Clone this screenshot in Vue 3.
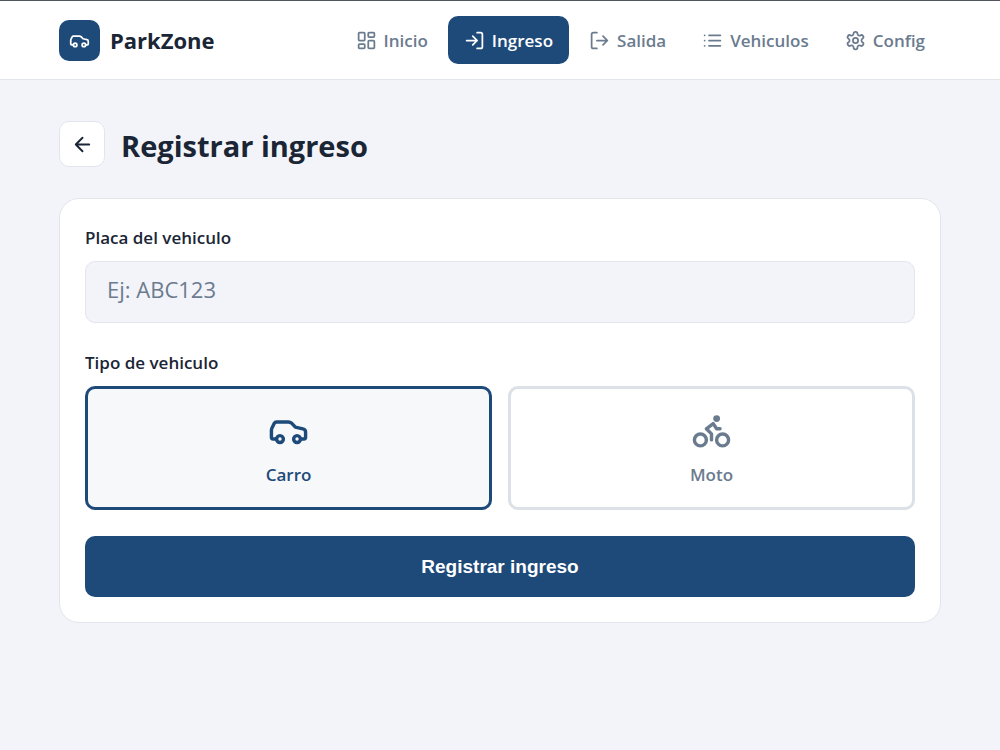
<script setup>
import { ref } from 'vue'

const plate = ref('')
const vehicleType = ref('carro')
const navItems = [
  { id: 'inicio', label: 'Inicio' },
  { id: 'ingreso', label: 'Ingreso' },
  { id: 'salida', label: 'Salida' },
  { id: 'vehiculos', label: 'Vehiculos' },
  { id: 'config', label: 'Config' }
]
const current = 'ingreso'
const carBody =
  'M19 17h2c.6 0 1-.4 1-1v-3c0-.9-.7-1.7-1.5-1.9C18.7 10.6 16 10 16 10s-1.3-1.4-2.2-2.3c-.5-.4-1.1-.7-1.800-.7H5c-.6 0-1.1.4-1.4.9l-1.4 2.9A3.700 3.700 0 0 0 2 12v4c0 .6.4 1 1 1h2'
</script>

<template>
  <div class="page">
    <header class="topbar">
      <div class="topbar-inner">
        <a class="brand" href="#">
          <span class="brand-mark">
            <svg class="icon small-icon" viewBox="0 0 24 24" aria-hidden="true">
              <path :d="carBody" />
              <circle cx="7" cy="17" r="2" />
              <circle cx="17" cy="17" r="2" />
            </svg>
          </span>
          <span class="brand-name">ParkZone</span>
        </a>
        <nav class="nav" aria-label="Principal">
          <a
            v-for="item in navItems"
            :key="item.id"
            class="nav-link"
            :class="{ active: item.id === current }"
            :aria-current="item.id === current ? 'page' : undefined"
            :href="'#' + item.id"
          >
            <svg class="icon small-icon" viewBox="0 0 24 24" aria-hidden="true">
              <g v-if="item.id === 'inicio'">
                <rect x="3" y="3" width="7" height="9" rx="1" />
                <rect x="14" y="3" width="7" height="5" rx="1" />
                <rect x="14" y="12" width="7" height="9" rx="1" />
                <rect x="3" y="16" width="7" height="5" rx="1" />
              </g>
              <path v-else-if="item.id === 'ingreso'" d="M15 3h4a2 2 0 0 1 2 2v14a2 2 0 0 1-2 2h-4M10 17l5-5-5-5M15 12H3" />
              <path v-else-if="item.id === 'salida'" d="M9 21H5a2 2 0 0 1-2-2V5a2 2 0 0 1 2-2h4M16 17l5-5-5-5M21 12H9" />
              <path v-else-if="item.id === 'vehiculos'" d="M8 6h13M8 12h13M8 18h13M3 6h.01M3 12h.01M3 18h.01" />
              <g v-else>
                <path d="M12.220 2h-.440a2 2 0 0 0-2 2v.180a2 2 0 0 1-1 1.730l-.430.250a2 2 0 0 1-2 0l-.150-.080a2 2 0 0 0-2.730.730l-.220.380a2 2 0 0 0 .730 2.730l.150.100a2 2 0 0 1 1 1.720v.510a2 2 0 0 1-1 1.740l-.150.090a2 2 0 0 0-.730 2.730l.220.380a2 2 0 0 0 2.730.730l.150-.080a2 2 0 0 1 2 0l.430.250a2 2 0 0 1 1 1.730V20a2 2 0 0 0 2 2h.440a2 2 0 0 0 2-2v-.180a2 2 0 0 1 1-1.730l.430-.250a2 2 0 0 1 2 0l.150.080a2 2 0 0 0 2.730-.730l.220-.390a2 2 0 0 0-.730-2.730l-.150-.080a2 2 0 0 1-1-1.740v-.500a2 2 0 0 1 1-1.740l.150-.090a2 2 0 0 0 .730-2.730l-.220-.380a2 2 0 0 0-2.730-.730l-.150.080a2 2 0 0 1-2 0l-.430-.250a2 2 0 0 1-1-1.730V4a2 2 0 0 0-2-2z" />
                <circle cx="12" cy="12" r="3" />
              </g>
            </svg>
            <span>{{ item.label }}</span>
          </a>
        </nav>
      </div>
    </header>

    <main class="content">
      <div class="heading">
        <button class="back" type="button" aria-label="Volver">
          <svg class="icon back-icon" viewBox="0 0 24 24" aria-hidden="true">
            <path d="M19 12H5M12 19l-7-7 7-7" />
          </svg>
        </button>
        <h1>Registrar ingreso</h1>
      </div>

      <form class="card" @submit.prevent>
        <div class="field">
          <label class="label" for="plate">Placa del vehiculo</label>
          <input id="plate" v-model="plate" class="plate" type="text" placeholder="Ej: ABC123" />
        </div>

        <div class="field">
          <span id="type-label" class="label">Tipo de vehiculo</span>
          <div class="types" role="group" aria-labelledby="type-label">
            <button
              class="type"
              :class="{ selected: vehicleType === 'carro' }"
              type="button"
              :aria-pressed="vehicleType === 'carro'"
              @click="vehicleType = 'carro'"
            >
              <svg class="icon type-icon" viewBox="0 0 24 24" aria-hidden="true">
                <path :d="carBody" />
                <circle cx="7" cy="17" r="2" />
                <circle cx="17" cy="17" r="2" />
              </svg>
              <span>Carro</span>
            </button>
            <button
              class="type"
              :class="{ selected: vehicleType === 'moto' }"
              type="button"
              :aria-pressed="vehicleType === 'moto'"
              @click="vehicleType = 'moto'"
            >
              <svg class="icon type-icon" viewBox="0 0 24 24" aria-hidden="true">
                <circle cx="5.500" cy="17.500" r="3.500" />
                <circle cx="18.500" cy="17.500" r="3.500" />
                <circle cx="15" cy="5" r="1" />
                <path d="M12 17.500V14l-3-3 4-3 2 3h2" />
              </svg>
              <span>Moto</span>
            </button>
          </div>
        </div>

        <button class="submit" type="submit">Registrar ingreso</button>
      </form>
    </main>
  </div>
</template>

<style>
body {
  background: #f3f4f9;
}
</style>

<style scoped>
.page {
  min-height: 100vh;
  box-sizing: border-box;
  border-top: 1px solid #50555d;
  background: #f3f4f9;
  color: #1a2535;
  font-family: "Open Sans", "Noto Sans", sans-serif;
}

.icon {
  flex: none;
  fill: none;
  stroke: currentColor;
  stroke-width: 2;
  stroke-linecap: round;
  stroke-linejoin: round;
}

.small-icon {
  width: 21px;
  height: 21px;
}

.topbar {
  background: #fff;
  border-bottom: 1px solid #e2e5ea;
}

.topbar-inner,
.content {
  max-width: 882px;
  margin: 0 auto;
}

.topbar-inner {
  display: flex;
  align-items: center;
  justify-content: space-between;
  padding: 15px 0;
}

.brand {
  display: flex;
  align-items: center;
  gap: 10px;
  color: inherit;
  text-decoration: none;
}

.brand-mark {
  display: flex;
  align-items: center;
  justify-content: center;
  width: 41px;
  height: 41px;
  border-radius: 10px;
  background: #1e4a7a;
  color: #fff;
}

.brand-name {
  font-size: 22px;
  font-weight: 700;
}

.nav {
  display: flex;
  gap: 4px;
}

.nav-link {
  display: flex;
  align-items: center;
  gap: 7px;
  height: 48px;
  padding: 0 16px;
  border-radius: 10px;
  color: #6b7b8f;
  font-size: 17px;
  font-weight: 600;
  text-decoration: none;
}

.nav-link.active {
  background: #1e4a7a;
  color: #fff;
}

.content {
  padding: 41px 0;
}

.heading {
  display: flex;
  align-items: center;
  gap: 16px;
  margin-bottom: 31px;
}

.back {
  display: flex;
  align-items: center;
  justify-content: center;
  width: 46px;
  height: 46px;
  padding: 0;
  border: 1px solid #e2e5ea;
  border-radius: 10px;
  background: #fff;
  color: #1a2535;
}

.back-icon {
  width: 23px;
  height: 23px;
}

h1 {
  margin: 0;
  padding-top: 4px;
  font-size: 29px;
  line-height: 42px;
  font-weight: 700;
}

.card {
  display: flex;
  flex-direction: column;
  gap: 26px;
  padding: 25px;
  border: 1px solid #e2e5ea;
  border-radius: 20px;
  background: #fff;
}

.field {
  display: flex;
  flex-direction: column;
  gap: 9px;
}

.label {
  font-size: 17px;
  line-height: 28px;
  font-weight: 600;
}

.plate {
  box-sizing: border-box;
  width: 100%;
  height: 62px;
  padding: 0 21px 6px;
  border: 1px solid #e2e5ea;
  border-radius: 10px;
  background: #f3f4f9;
  color: #1a2535;
  font-family: inherit;
  font-size: 22px;
}

.plate::placeholder {
  color: #6b7b8f;
}

.types {
  display: grid;
  grid-template-columns: 1fr 1fr;
  gap: 16px;
}

.type {
  display: flex;
  flex-direction: column;
  align-items: center;
  justify-content: center;
  gap: 10px;
  height: 124px;
  padding: 2px 0 0;
  border: 3px solid #dce1e7;
  border-radius: 10px;
  background: #fff;
  color: #6b7b8f;
  font-family: inherit;
  font-size: 17px;
  line-height: 28px;
  font-weight: 600;
}

.type.selected {
  border-color: #1e4a7a;
  background: #f6f8fa;
  color: #1e4a7a;
}

.type-icon {
  width: 41px;
  height: 41px;
}

.submit {
  height: 61px;
  border: 0;
  border-radius: 10px;
  background: #1e4a7a;
  color: #fff;
  font-family: "Liberation Sans", sans-serif;
  font-size: 19px;
  font-weight: 700;
}
</style>
